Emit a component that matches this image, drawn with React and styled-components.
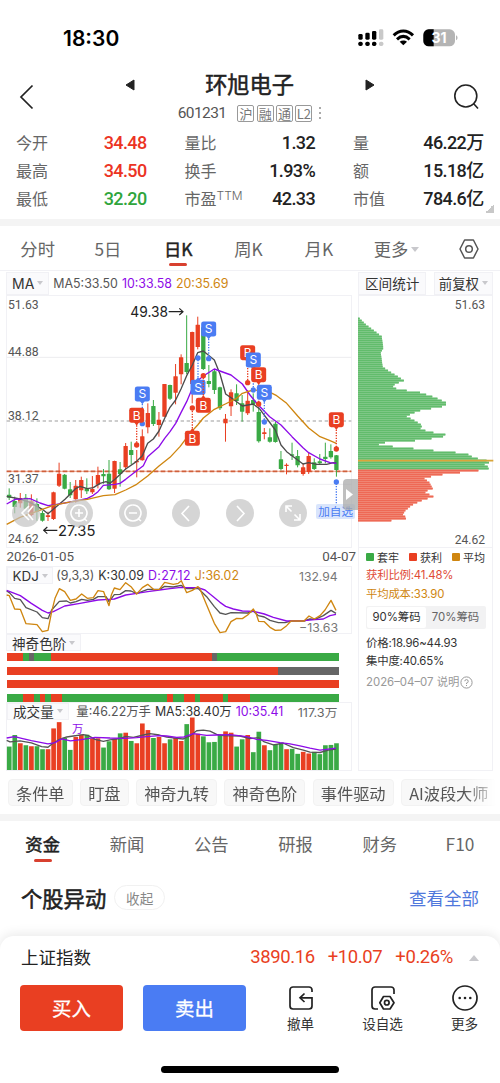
import styled, { createGlobalStyle } from "styled-components";

const RED = "#e93f22";
const GREEN = "#3aaa45";
const BLUE = "#4a7cf3";
const PURPLE = "#8d0be8";
const ORANGE = "#cf8610";
const INK = "#222";
const LINE = "#f1f1f5";

const CJK = `"Noto Sans CJK SC", sans-serif`;
const SANS = `Inter, ${CJK}`;
const DIN = `Roboto, ${CJK}`;

const GlobalStyle = createGlobalStyle`
  * { box-sizing: border-box; }
  body { margin: 0; background: #fff; }
  button { font: inherit; border: 0; padding: 0; background: none; color: inherit; }
`;

// ---------- data ----------

const quotes = [
  ["今开", "34.48", "#ec3323"],
  ["量比", "1.32"],
  ["量", "46.22万"],
  ["最高", "34.50", "#ec3323"],
  ["换手", "1.93%"],
  ["额", "15.18亿"],
  ["最低", "32.20", "#2fa53c"],
  ["市盈", "42.33", INK, "TTM"],
  ["市值", "784.6亿"],
];

// color, high, body top, body bottom, low (chart units, 3 per px)
const candles = [
  "g 655 674 683 690", "g 680 693 711 730", "r 669 684 700 713", "g 672 683 716 720",
  "r 673 694 735 738", "g 685 702 725 752", "g 722 729 752 755", "t 725 736 741 753",
  "r 665 667 747 750", "r 578 611 647 651", "g 612 614 656 658", "g 636 658 676 684",
  "r 630 647 688 698", "r 620 630 661 684", "g 625 655 664 672", "r 618 657 667 672",
  "r 590 615 644 655", "g 597 612 619 641", "g 570 611 658 660", "r 572 573 656 669",
  "g 576 598 612 650", "r 519 528 592 598", "g 515 540 555 583", "r 540 573 577 622",
  "r 478 499 571 572", "r 400 429 472 490", "g 390 408 462 468", "r 426 449 465 500",
  "r 342 342 440 440", "g 344 345 386 390", "r 282 319 368 403", "r 253 262 313 343",
  "g 136 279 306 312", "r 185 186 342 400", "r 140 164 231 238", "g 160 172 297 300",
  "g 285 333 342 352", "g 300 304 360 372", "g 350 352 415 420", "r 432 446 460 515",
  "r 358 367 409 438", "g 343 370 393 405", "g 375 400 425 455", "r 360 392 430 435",
  "g 370 390 402 425", "g 410 426 514 518", "r 474 487 492 508", "g 475 502 515 518",
  "g 455 461 516 518", "g 543 568 597 601", "r 580 584 588 613", "g 518 553 557 570",
  "g 540 558 586 592", "r 580 592 612 617", "r 548 558 606 612", "g 565 577 597 600",
  "g 552 574 580 585", "g 518 560 567 580", "g 523 543 562 566", "g 555 556 600 620",
].map((row) => {
  const [c, ...n] = row.split(" ");
  return [c, ...n.map(Number)];
});

const ma5 =
  "20,679 60,687 90,697 127,718 144,731 160,718 195,688 228,655 240,649 262,656 280,653 300,640 318,635 330,640 345,628 377,597 410,574 427,557 443,520 460,507 477,483 494,445 510,412 527,390 543,357 560,317 577,285 593,248 610,243 643,270 660,312 677,372 710,395 727,408 760,402 780,418 826,480 843,525 860,545 909,582 926,578 950,583 980,583 1000,578 1009,579";
const ma10 =
  "20,702 45,688 90,686 120,699 144,707 170,703 228,693 262,685 280,676 294,665 310,646 345,643 360,640 377,628 410,602 430,587 443,560 477,530 494,505 510,485 527,460 543,428 560,395 577,355 593,332 610,318 643,297 693,315 727,342 750,375 772,402 809,440 843,465 876,500 909,533 926,548 960,567 990,578 1009,580";
const ma20 =
  "20,763 60,742 100,728 160,706 200,698 262,688 310,677 345,674 377,660 410,643 443,618 477,588 510,562 540,530 570,490 593,465 610,444 643,418 676,402 710,385 727,370 759,360 800,362 830,377 860,400 893,438 926,474 960,500 990,512 1009,520";

// letter, x, label center y, dot y
const marks = [
  ["S", 427, 372, 461], ["B", 410, 436, 525], ["S", 626, 177, 266], ["S", 594, 352, 264],
  ["B", 610, 406, 317], ["B", 577, 505, 414], ["B", 743, 248, 338], ["S", 760, 270, 360],
  ["B", 776, 314, 402], ["S", 793, 367, 456], ["B", 1009, 449, 537],
];

// y, width
const chips = [
  [143, 5], [160, 22], [178, 46], [197, 71], [232, 76], [245, 68], [288, 74], [303, 96],
  [318, 121], [330, 139], [338, 112], [350, 103], [356, 126], [365, 186], [380, 232],
  [398, 270], [407, 252], [420, 181], [436, 144], [450, 171], [464, 193], [475, 186],
  [485, 226], [493, 274], [500, 241], [508, 186], [516, 66], [523, 61], [530, 136],
  [540, 236], [548, 326], [560, 346], [570, 390], [574, 396], [580, 378], [592, 397],
  [600, 356], [606, 296], [613, 236], [622, 198], [635, 214], [653, 224], [663, 198],
  [677, 226], [690, 188], [703, 161], [720, 141], [733, 134], [742, 151], [749, 100], [756, 76],
];

const kdjK =
  "20,138 28,143 44,160 61,164 78,188 111,201 127,218 144,221 155,195 178,169 200,168 211,174 228,170 245,163 262,166 280,163 294,155 318,155 327,170 343,149 360,148 377,137 393,138 410,146 427,139 443,133 478,133 494,124 520,126 543,121 560,131 594,130 620,155 643,185 660,204 677,208 693,203 743,204 760,198 775,212 793,216 810,226 835,233 855,233 873,228 912,228 930,222 945,223 970,212 993,196 1008,205";
const kdjD =
  "20,136 61,152 94,175 127,196 144,204 160,200 194,183 240,175 294,165 327,163 343,162 377,150 410,145 443,140 478,135 510,131 543,127 560,128 594,128 615,135 640,155 660,172 677,184 700,192 727,198 760,199 793,207 820,217 860,228 912,227 945,224 970,222 990,212 1008,208";
const kdjJ =
  "20,150 28,152 44,192 61,193 78,236 111,239 127,260 144,256 155,200 165,160 178,131 194,140 211,166 228,162 245,147 262,160 280,158 294,137 311,140 318,160 327,182 334,150 343,129 360,134 377,113 393,125 410,147 427,128 443,118 462,134 478,133 494,112 520,118 535,115 544,107 560,143 577,136 594,125 600,132 620,180 643,235 660,263 677,260 693,230 710,220 727,221 743,210 760,192 768,205 776,229 793,230 810,247 826,256 843,255 860,242 873,228 912,228 927,213 943,222 960,212 975,195 993,166 1008,196";

const ladder = [
  "r3 g1 k1 g3 r29 k1 g22",
  "r49 k11",
  "r60",
  "g3 r2 g1 r1 g1 r2 g19 r1 g2 r2 g1 r4 g1 r4 g16",
].map((row) => row.split(" ").map((s) => [s[0], Number(s.slice(1))]));

const volumes =
  "g157 g122 r147 g153 r156 g156 g165 r165 r102 r83 g130 g167 r128 r121 g121 r132 r132 g160 g141 r133 g117 r115 g140 r147 r87 r107 g131 r128 r147 g135 r130 r140 g89 r69 r118 g126 g144 g143 g122 r111 r115 g157 g135 r122 g174 g112 r153 g168 g150 g145 r165 g164 g179 r173 r178 g173 g180 g153 g152 g147"
    .split(" ")
    .map((s) => [s[0], Number(s.slice(1))]);
const vol5 =
  "20,138 30,143 60,140 94,146 125,157 144,159 155,150 175,137 200,128 220,125 250,121 265,124 285,135 310,141 330,137 360,133 377,126 400,129 430,122 450,118 478,122 500,128 530,132 550,134 570,125 590,109 610,107 630,110 650,120 670,124 720,125 750,133 776,130 793,143 820,152 850,147 880,160 910,168 930,174 960,175 985,168 1008,165";
const vol10 =
  "20,131 44,127 65,132 94,139 144,149 165,145 185,134 211,140 244,136 285,129 330,131 377,132 410,130 440,127 478,124 500,125 530,129 552,128 580,118 620,123 650,122 690,121 740,127 770,135 800,138 840,145 870,149 900,155 930,162 960,168 985,165 1008,162";

const fills = { r: RED, g: GREEN, k: "#666", t: RED };
const slotX = (i) => 27.5 + i * 16.64;

// ---------- layout ----------

const Screen = styled.div`
  width: 500px;
  height: 1083px;
  display: flex;
  flex-direction: column;
  overflow: hidden;
  background: #fff;
  color: ${INK};
  font-family: ${SANS};
`;

const StatusBar = styled.div`
  height: 70px;
  padding: 6px 42px 0 63px;
  display: flex;
  align-items: center;
  justify-content: space-between;
  font-size: 21px;
  font-weight: 600;
  color: #000;
`;

const Header = styled.header`
  height: 59px;
  display: grid;
  grid-template-columns: 18px 16px 90px 12px 1fr 12px 78px 26px 20px;
`;

const HeaderIcon = styled.button`
  display: flex;
  margin-top: ${(p) => p.$top}px;
  height: 26px;
`;

const TitleBlock = styled.div`
  display: flex;
  flex-direction: column;
  align-items: center;
`;

const Title = styled.div`
  height: 31px;
  margin-left: -1px;
  font: 400 22.2px/27px ${CJK};
  -webkit-text-stroke: 0.5px ${INK};
`;

const SubTitle = styled.div`
  height: 24px;
  display: flex;
  align-items: center;
  font: 400 15.5px/24px ${DIN};
  letter-spacing: -0.6px;
  color: #555;
  margin-left: 4px;
`;

const Tag = styled.span`
  width: 17px;
  height: 17px;
  margin-left: 2.3px;
  border: 1px solid #999;
  border-radius: 2px;
  display: flex;
  align-items: center;
  justify-content: center;
  font: 400 13px/15px ${CJK};
  letter-spacing: 0;
  color: #777;
  &:first-of-type {
    margin-left: 11px;
  }
`;

const Quotes = styled.div`
  height: 90px;
  padding: 0 17px 0 16px;
  display: grid;
  grid-template-columns: 130px 130px 130px;
  grid-auto-rows: 28px;
  justify-content: space-between;
  align-items: center;
  background: linear-gradient(135deg, transparent 50%, #c8c8c8 50%) 485px 75px / 9px 9px no-repeat;
`;

const Quote = styled.div`
  display: flex;
  justify-content: space-between;
  height: 28px;
  font: 400 16px/26px ${CJK};
  color: #666;
  sup {
    font: 300 12px/12px ${SANS};
    vertical-align: 5px;
  }
`;

const QuoteValue = styled.b`
  font: 500 18px/28px ${DIN};
  letter-spacing: -0.6px;
  margin-right: -0.6px;
  color: ${(p) => p.$color || INK};
`;

const Divider = styled.div`
  height: ${(p) => p.$h}px;
  flex: none;
  background: #f4f4f4;
`;

const Tabs = styled.nav`
  display: flex;
  height: ${(p) => p.$h}px;
  padding-left: ${(p) => p.$pad}px;
`;

const Tab = styled.button`
  position: relative;
  width: ${(p) => p.$w}px;
  height: 46px;
  display: flex;
  align-items: center;
  justify-content: center;
  gap: 3px;
  font: 400 17.3px/46px ${CJK};
  color: ${(p) => (p.$active ? INK : "#666")};
  -webkit-text-stroke: ${(p) => (p.$active ? "0.5px" : "0")} ${INK};
  &::after {
    content: "";
    display: ${(p) => (p.$active ? "block" : "none")};
    position: absolute;
    left: calc(50% - 9px);
    bottom: ${(p) => p.$bar}px;
    width: 18px;
    height: 2.6px;
    border-radius: 2px;
    background: #d8402f;
  }
`;

const Caret = styled.i`
  border: ${(p) => p.$s || 3}px solid transparent;
  border-bottom-width: 0;
  border-top: ${(p) => (p.$s || 3) + 1}px solid #c8c8cc;
`;

const Charts = styled.section`
  height: 501px;
  padding: 0 7px 0 6px;
  display: grid;
  grid-template-columns: 346px 135px;
  justify-content: space-between;
  border-top: 1px solid ${LINE};
`;

const Column = styled.div`
  display: flex;
  flex-direction: column;
  min-width: 0;
`;

const Toolbar = styled.div`
  height: ${(p) => p.$h || 24}px;
  display: flex;
  align-items: center;
  justify-content: ${(p) => (p.$spread ? "space-between" : "flex-start")};
`;

const Picker = styled.button`
  flex: none;
  height: ${(p) => p.$h || 23}px;
  padding: 0 ${(p) => p.$pad || 5}px;
  display: flex;
  align-items: center;
  gap: 3px;
  background: #fafafc;
  border: 1px solid ${LINE};
  font-size: ${(p) => p.$size || 13.6}px;
  white-space: nowrap;
  color: #333;
`;

const Legend = styled.span`
  font-size: 12.4px;
  letter-spacing: ${(p) => p.$track || 0}px;
  margin-left: ${(p) => p.$gap || 4}px;
  white-space: nowrap;
  color: ${(p) => p.$color || "#555"};
`;

const Panel = styled.div`
  position: relative;
  flex: none;
  height: ${(p) => p.$h}px;
  border: 1px solid ${LINE};
  display: grid;
  grid-template: 1fr / 1fr;
  > * {
    grid-area: 1 / 1;
    min-width: 0;
    min-height: 0;
  }
`;

const Plot = styled.svg`
  display: block;
  width: 100%;
  height: 100%;
  overflow: visible;
`;

const DateRow = styled.div`
  height: 18px;
  flex: none;
  display: flex;
  justify-content: space-between;
  margin-right: -4px;
  padding-left: 0.5px;
  font: 400 13.4px/17px ${DIN};
  color: #555;
`;

const ZoomTools = styled.div`
  position: absolute;
  left: 5px;
  top: 203px;
  display: flex;
  gap: 25.4px;
`;

const Round = styled.button`
  width: 28px;
  height: 28px;
  border-radius: 50%;
  display: flex;
  align-items: center;
  justify-content: center;
  background: rgba(195, 195, 195, 0.7);
`;

const Drawer = styled.button`
  position: absolute;
  right: -6.5px;
  top: 183px;
  width: 14.5px;
  height: 31px;
  border-radius: 4px 0 0 4px;
  display: flex;
  align-items: center;
  justify-content: center;
  background: rgba(170, 170, 170, 0.75);
`;

const AddTag = styled.span`
  position: absolute;
  right: -4px;
  top: 208px;
  height: 15px;
  padding: 0 2px;
  border-radius: 2px;
  background: rgba(210, 224, 252, 0.85);
  font: 400 11.6px/15px ${CJK};
  color: ${BLUE};
`;

const Ladder = styled.div`
  display: flex;
  flex-direction: column;
  gap: 5.4px;
  padding: 2px 13px 0 0.5px;
`;

const Stripe = styled.div`
  display: flex;
  height: 8.2px;
`;

const Segment = styled.span`
  flex: ${(p) => p.$n} 0 0;
  background: ${(p) => fills[p.$c]};
`;

const Keys = styled.div`
  display: flex;
  gap: 10px;
  font: 400 11px/18px ${CJK};
  color: #333;
`;

const Key = styled.span`
  display: flex;
  align-items: center;
  gap: 3px;
  &::before {
    content: "";
    width: 8px;
    height: 8px;
    border-radius: 1px;
    background: ${(p) => p.$color};
  }
`;

const Side = styled.div`
  flex: 1;
  padding-left: 7px;
  border: 1px solid ${LINE};
  border-top: 0;
`;

const Fact = styled.div`
  display: flex;
  align-items: center;
  font: 400 11.4px/18.6px ${SANS};
  letter-spacing: ${(p) => (p.$note ? 0 : -0.2)}px;
  margin-top: ${(p) => (p.$note ? 2.5 : 0)}px;
  gap: 1px;
  white-space: nowrap;
  color: ${(p) => p.$color || "#333"};
`;

const Toggle = styled.div`
  width: 120px;
  height: 23px;
  margin: 3px 0 4.5px;
  padding: 1px;
  display: flex;
  background: #f2f2f3;
  border-radius: 2px;
`;

const ToggleItem = styled.button`
  flex: 1;
  border-radius: 2px;
  background: ${(p) => (p.$on ? "#fff" : "transparent")};
  color: ${(p) => (p.$on ? "#333" : "#666")};
  font: 400 11.4px/21px ${SANS};
`;

const ChipRow = styled.div`
  height: 43px;
  flex: none;
  padding: 8px 0 0 8px;
  display: flex;
  gap: 7.6px;
  mask-image: linear-gradient(90deg, #000 465px, rgba(0, 0, 0, 0.3) 490px, transparent 496px);
`;

const Chip = styled.button`
  flex: none;
  height: 27px;
  padding: 0 7px;
  border: 1px solid #f2f2f2;
  border-radius: 4px;
  background: #f8f8f8;
  font: 400 16.2px/24px ${CJK};
  color: #555;
`;

const SectionHead = styled.div`
  flex: 1;
  padding: 14px 21px 0;
  display: flex;
  align-items: flex-start;
  line-height: 32px;
`;

const SectionTitle = styled.h2`
  margin: 0;
  font: 400 21.3px/32px ${CJK};
  -webkit-text-stroke: 0.55px ${INK};
`;

const Fold = styled.button`
  width: 51px;
  height: 25px;
  margin: 3px 0 0 8px;
  border: 1.5px solid #f1f1f1;
  border-radius: 13px;
  font: 400 13.6px/20px ${CJK};
  color: #888;
`;

const More = styled.a`
  margin-left: auto;
  font: 400 17.5px/32px ${CJK};
  color: #5078dc;
`;

const Sheet = styled.footer`
  height: 147px;
  flex: none;
  border-radius: 14px 14px 0 0;
  box-shadow: 0 -2px 12px rgba(0, 0, 0, 0.09);
  background: #fff;
  display: flex;
  flex-direction: column;
`;

const IndexRow = styled.div`
  height: 49px;
  padding: 0 21px 6px;
  display: flex;
  align-items: center;
  gap: 13px;
  font: 400 17.5px/41px ${CJK};
`;

const IndexName = styled.span`
  height: 43px;
`;

const IndexValue = styled.span`
  font: 400 18.5px/43px ${DIN};
  letter-spacing: -0.4px;
  color: ${RED};
`;

const Spacer = styled.span`
  flex: 1;
`;

const UpCaret = styled.i`
  margin-left: 3px;
  border: 5px solid transparent;
  border-top-width: 0;
  border-bottom: 6px solid #c8c8cc;
`;

const Actions = styled.div`
  padding: 0 21px 0 20px;
  height: 78px;
  display: flex;
`;

const Trade = styled.button`
  width: 103px;
  height: 46px;
  margin-right: 20px;
  border-radius: 4px;
  background: ${(p) => p.$color};
  color: #fff;
  font: 400 19.4px/44px ${CJK};
  -webkit-text-stroke: 0.3px #fff;
`;

const Tool = styled.button`
  display: flex;
  flex-direction: column;
  align-items: center;
  margin-left: ${(p) => p.$gap}px;
  font: 400 13.6px/25px ${CJK};
  color: #333;
  svg {
    display: block;
  }
`;

const HomeIndicator = styled.div`
  width: 178px;
  height: 7px;
  margin: 3px auto 0;
  border-radius: 4px;
  background: #000;
`;

// ---------- icons ----------

const StatusIcons = () => (
  <svg width="100" height="18" viewBox="1073 86 300 54">
    <g fill="#000">
      {[[1074, 101], [1095, 97], [1115, 92]].map(([x, y]) => (
        <g key={x}>
          <rect x={x} y={y} width="13" height={118 - y} rx="4" />
          <rect x={x} y="124" width="13" height="13" rx="5" />
        </g>
      ))}
    </g>
    <g fill="#c9c9c9">
      <rect x="1136" y="87" width="13" height="31" rx="4" />
      <rect x="1136" y="124" width="13" height="13" rx="5" />
    </g>
    <g fill="none" stroke="#000" strokeWidth="9">
      <path d="M1180 105C1197 88 1221 88 1238 105" />
      <path d="M1190 117C1202 106 1216 106 1228 117" />
    </g>
    <path d="M1198 124C1204 119 1214 119 1220 124L1209 135Z" fill="#000" />
    <rect x="1269" y="87" width="95" height="51" rx="16" fill="#b4b4b4" />
    <path d="M1300 87H1285A16 16 0 0 0 1269 103V122A16 16 0 0 0 1285 138H1300Z" fill="#000" />
    <path d="M1367 105C1373 108 1373 117 1367 120Z" fill="#b4b4b4" />
    <text x="1316" y="128" fontFamily={SANS} fontSize="42" fontWeight="700" fill="#fff" textAnchor="middle">31</text>
  </svg>
);

const BackIcon = () => (
  <svg width="16" height="26" viewBox="0 0 16 26" fill="none" stroke={INK} strokeWidth="1.7">
    <path d="M14.5 1.5 3 13 14.5 24.5" />
  </svg>
);

const SearchIcon = () => (
  <svg width="26" height="26" viewBox="0 0 26 26" fill="none" stroke={INK} strokeWidth="1.6">
    <circle cx="11.8" cy="12" r="11" />
    <path d="M19.5 19.5 24 24.5" />
  </svg>
);

const Arrow = ({ flip }) => (
  <svg width="12" height="14" viewBox="0 0 12 14" fill={INK}>
    <path d={flip ? "M2 2 10 7 2 12Z" : "M10 2 2 7 10 12Z"} stroke={INK} strokeLinejoin="round" />
  </svg>
);

const GearIcon = () => (
  <svg width="20" height="20" viewBox="0 0 20 20" fill="none" stroke="#555" strokeWidth="1.5">
    <path d="M5.6 1H14.4L19 10 14.4 19H5.6L1 10Z" strokeLinejoin="round" />
    <circle cx="10" cy="10" r="3.3" />
  </svg>
);

const CancelIcon = () => (
  <svg width="26" height="26" viewBox="0 0 26 26" fill="none" stroke={INK} strokeWidth="1.7">
    <path d="M24 7V5A3 3 0 0 0 21 2H5A3 3 0 0 0 2 5V21A3 3 0 0 0 5 24H21A3 3 0 0 0 24 21V12.8H12.5" />
    <path d="M16.5 8.5 12 12.8 16.5 17" />
  </svg>
);

const WatchIcon = () => (
  <svg width="26" height="26" viewBox="0 0 26 26" fill="none" stroke={INK} strokeWidth="1.7">
    <path d="M24 9V5A3 3 0 0 0 21 2H5A3 3 0 0 0 2 5V21A3 3 0 0 0 5 24H8" />
    <path d="M13.5 11.5H20L24 17.7 20 24H13.5L9.8 17.7Z" strokeLinejoin="round" />
    <circle cx="16.8" cy="17.7" r="2.3" />
  </svg>
);

const MoreIcon = () => (
  <svg width="26" height="26" viewBox="0 0 26 26" fill="none" stroke={INK} strokeWidth="1.7">
    <circle cx="13" cy="13" r="12" />
    <g fill={INK} stroke="none">
      <circle cx="7.7" cy="13" r="1.3" />
      <circle cx="13" cy="13" r="1.3" />
      <circle cx="18.3" cy="13" r="1.3" />
    </g>
  </svg>
);

const toolPaths = [
  "M13 3 6 10 13 17M17 3 12 9M17 17 12 11",
  "M10 2A8 8 0 1 1 9.9 2M6 10H14M10 6V14M15.5 16 18 18",
  "M10 2A8 8 0 1 1 9.9 2M6 10H14M15.5 16 18 18",
  "M13 3 6 10.5 13 18",
  "M7 3 14 10.5 7 18",
  "M3 9V3H9M3 3 8.5 8.5M17 11V17H11M17 17 11.5 11.5",
];

// ---------- charts ----------

const Line = ({ points, color }) => (
  <polyline points={points} fill="none" stroke={color} strokeWidth="4" strokeLinejoin="round" />
);

const AxisText = ({ x, y, w, size = 40, family = DIN, fill = "#555", children }) => (
  <text x={x} y={y} fontFamily={family} fontSize={size} fill={fill} textLength={w} lengthAdjust="spacingAndGlyphs">
    {children}
  </text>
);

const Mark = ({ letter, x, y, dot }) => {
  const color = letter === "B" ? RED : BLUE;
  const dir = dot > y ? 1 : -1;
  return (
    <g>
      <path d={`M${x} ${y + 22 * dir}V${dot}`} stroke={color} strokeWidth="4" strokeDasharray="4 4" />
      <circle cx={x} cy={dot} r="8" fill={color} />
      <path d={`M${x - 8} ${y + 20 * dir}h16l-8 ${11 * dir}z`} fill={color} />
      <rect x={x - 22.5} y={y - 22.5} width="45" height="45" rx="7" fill={color} />
      <text x={x} y={y + 13} fontFamily={SANS} fontSize="36" fill="#fff" textAnchor="middle">
        {letter}
      </text>
    </g>
  );
};

const CandleChart = () => (
  <Plot viewBox="21 78 1032 753" preserveAspectRatio="none">
    <g stroke="#ececef" strokeWidth="3">
      <path d="M20 262H1054M20 643H1054" />
    </g>
    <path d="M20 453H1054" stroke="#bdbdbd" strokeWidth="4" strokeDasharray="10 8" />
    <AxisText x="24" y="116" w="92">51.63</AxisText>
    <AxisText x="24" y="259" w="92">44.88</AxisText>
    <AxisText x="24" y="450" w="92">38.12</AxisText>
    <AxisText x="24" y="639" w="92">31.37</AxisText>
    <AxisText x="24" y="820" w="92">24.62</AxisText>
    <path d="M20 604H1054" stroke="#f3b8a4" strokeWidth="4" />
    <path d="M20 604H1054" stroke="#d0603c" strokeWidth="5" strokeDasharray="14 7" />
    {candles.map(([c, hi, top, bottom, lo], i) => (
      <g key={i} fill={fills[c]}>
        <rect x={slotX(i) - 1.5} y={hi} width="3" height={lo - hi} />
        <rect x={slotX(i) - 6.5} y={top} width="13" height={bottom - top} rx="1" />
      </g>
    ))}
    <Line points={ma5} color="#4c4c4c" />
    <Line points={ma10} color={PURPLE} />
    <Line points={ma20} color={ORANGE} />
    {marks.map(([letter, x, y, dot], i) => (
      <Mark key={i} letter={letter} x={x} y={y} dot={dot} />
    ))}
    <path d="M1009 640V704" stroke={BLUE} strokeWidth="4" strokeDasharray="4 4" />
    <circle cx="1009" cy="636" r="8" fill={BLUE} />
    <AxisText x="391" y="141" w="113" size="43" family={SANS} fill="#222">49.38</AxisText>
    <AxisText x="174" y="797" w="112" size="43" family={SANS} fill="#222">27.35</AxisText>
    <path d="M506 125H549M538 115 549 125 538 135M172 781H131M142 771 131 781 142 791" fill="none" stroke="#222" strokeWidth="3.5" />
  </Plot>
);

const widthAt = (y) => {
  const k = chips.findIndex((c) => c[0] > y);
  const [y0, w0] = chips[k - 1];
  const [y1, w1] = chips[k];
  return w0 + ((w1 - w0) * (y - y0)) / (y1 - y0);
};

const ChipChart = () => {
  const rows = [];
  for (let y = 143; y < 754; y += 6) rows.push(y);
  return (
    <Plot viewBox="3 0 399 753" preserveAspectRatio="none">
      <g transform="translate(0 -78)">
        {rows.map((y) => (
          <g key={y}>
            <rect x="0" y={y} width={widthAt(y)} height="6" fill={y < 598 ? "#75c47e" : "#f17e6b"} />
            <rect x="0" y={y} width={widthAt(y)} height="4.4" fill={y < 598 ? "#62bc6c" : "#ee6955"} />
          </g>
        ))}
        <path d="M0 572H406" stroke="#d9a53a" strokeWidth="5" />
        <AxisText x="290" y="116" w="91">51.63</AxisText>
        <AxisText x="290" y="822" w="91">24.62</AxisText>
      </g>
    </Plot>
  );
};

const KdjChart = () => (
  <Plot viewBox="21 66 1032 198" preserveAspectRatio="none">
    <Line points={kdjK} color="#555" />
    <Line points={kdjD} color={PURPLE} />
    <Line points={kdjJ} color={ORANGE} />
    <AxisText x="897" y="107" w="116" size="37" family={SANS} fill="#777">132.94</AxisText>
    <AxisText x="897" y="261" w="117" size="37" family={SANS} fill="#777">−13.63</AxisText>
  </Plot>
);

const VolumeChart = () => (
  <Plot viewBox="21 25 1032 203" preserveAspectRatio="none">
    {volumes.map(([c, y], i) => (
      <rect key={i} x={slotX(i) - 6.8} y={y} width="14" height={228 - y} fill={fills[c]} />
    ))}
    <Line points={vol5} color="#555" />
    <Line points={vol10} color={PURPLE} />
    <AxisText x="216" y="117" w="34" size="34" family={CJK} fill={PURPLE}>万</AxisText>
    <AxisText x="893" y="68" w="119" size="36" family={SANS} fill="#666">117.3万</AxisText>
  </Plot>
);

// ---------- page ----------

const App = () => (
  <>
    <GlobalStyle />
    <Screen>
      <StatusBar>
        <span>18:30</span>
        <StatusIcons />
      </StatusBar>

      <Header>
        <span />
        <HeaderIcon $top={14}><BackIcon /></HeaderIcon>
        <span />
        <HeaderIcon $top={8}><Arrow /></HeaderIcon>
        <TitleBlock>
          <Title>环旭电子</Title>
          <SubTitle>
            601231
            <Tag>沪</Tag>
            <Tag>融</Tag>
            <Tag>通</Tag>
            <Tag>L2</Tag>
            <svg width="14" height="14" viewBox="0 0 14 14" fill="#aaa">
              <path d="M7 1h2v2H7zM7 6h2v2H7zM7 11h2v2H7z" />
            </svg>
          </SubTitle>
        </TitleBlock>
        <HeaderIcon $top={8}><Arrow flip /></HeaderIcon>
        <span />
        <HeaderIcon $top={14}><SearchIcon /></HeaderIcon>
      </Header>

      <Quotes>
        {quotes.map(([label, value, color, sup]) => (
          <Quote key={label}>
            <span>
              {label}
              {sup && <sup>{sup}</sup>}
            </span>
            <QuoteValue $color={color}>{value}</QuoteValue>
          </Quote>
        ))}
      </Quotes>
      <Divider $h={7} />

      <Tabs $h={44} $pad={2.5}>
        {["分时", "5日", "日K", "周K", "月K"].map((t) => (
          <Tab key={t} $w={70.3} $bar={6} $active={t === "日K"}>{t}</Tab>
        ))}
        <Tab $w={85} $bar={6}>
          更多
          <Caret $s={4.5} />
        </Tab>
        <Tab $w={60} $bar={6}><GearIcon /></Tab>
      </Tabs>

      <Charts>
        <Column>
          <Toolbar>
            <Picker $size={14}>MA <Caret /></Picker>
            <Legend>MA5:33.50</Legend>
            <Legend $color={PURPLE}>10:33.58</Legend>
            <Legend $color={ORANGE}>20:35.69</Legend>
          </Toolbar>
          <Panel $h={253}>
            <CandleChart />
            <ZoomTools>
              {toolPaths.map((d) => (
                <Round key={d}>
                  <svg width="20" height="20" viewBox="0 0 20 20" fill="none" stroke="#fff" strokeWidth="1.6">
                    <path d={d} />
                  </svg>
                </Round>
              ))}
            </ZoomTools>
            <AddTag>加自选</AddTag>
            <Drawer>
              <svg width="8" height="11" viewBox="0 0 8 11" fill="#fff">
                <path d="M0 0 7 5.5 0 11Z" />
              </svg>
            </Drawer>
          </Panel>
          <DateRow>
            <span>2026-01-05</span>
            <span>04-07</span>
          </DateRow>
          <Panel $h={68}>
            <KdjChart />
            <Toolbar $h={17}>
              <Picker $h={17} $size={13.4} $pad={4.5}>KDJ <Caret /></Picker>
              <Legend $gap={3}>(9,3,3)</Legend>
              <Legend $color="#333">K:30.09</Legend>
              <Legend $color={PURPLE} $track={0.3}>D:27.12</Legend>
              <Legend $color={ORANGE}>J:36.02</Legend>
            </Toolbar>
          </Panel>
          <Toolbar $h={17}>
            <Picker $h={17}>神奇色阶 <Caret /></Picker>
          </Toolbar>
          <Ladder>
            {ladder.map((row, i) => (
              <Stripe key={i}>
                {row.map(([c, n], j) => (
                  <Segment key={j} $c={c} $n={n} />
                ))}
              </Stripe>
            ))}
          </Ladder>
          <Panel $h={69}>
            <VolumeChart />
            <Toolbar $h={17}>
              <Picker $h={17}>成交量 <Caret /></Picker>
              <Legend $gap={7.5}>量:46.22万手</Legend>
              <Legend $color="#333" $track={-0.1}>MA5:38.40万</Legend>
              <Legend $color={PURPLE}>10:35.41</Legend>
            </Toolbar>
          </Panel>
        </Column>

        <Column>
          <Toolbar $spread>
            <Picker $pad={6}>区间统计</Picker>
            <Picker $size={13.4} $pad={4}>前复权 <Caret /></Picker>
          </Toolbar>
          <Panel $h={253}>
            <ChipChart />
          </Panel>
          <Side>
            <Keys>
              <Key $color={GREEN}>套牢</Key>
              <Key $color={RED}>获利</Key>
              <Key $color={ORANGE}>平均</Key>
            </Keys>
            <Fact $color="#e04a35">获利比例:41.48%</Fact>
            <Fact $color={ORANGE}>平均成本:33.90</Fact>
            <Toggle>
              <ToggleItem $on>90%筹码</ToggleItem>
              <ToggleItem>70%筹码</ToggleItem>
            </Toggle>
            <Fact>价格:18.96~44.93</Fact>
            <Fact>集中度:40.65%</Fact>
            <Fact $color="#999" $note>
              2026–04–07 说明
              <svg width="13" height="13" viewBox="0 0 13 13" fill="none" stroke="#999">
                <circle cx="6.5" cy="6.5" r="5.6" />
                <path d="M4.8 5.2A1.7 1.7 0 1 1 6.5 7V8M6.5 9V10" />
              </svg>
            </Fact>
          </Side>
        </Column>
      </Charts>

      <ChipRow>
        {["条件单", "盯盘", "神奇九转", "神奇色阶", "事件驱动", "AI波段大师"].map((c) => (
          <Chip key={c}>{c}</Chip>
        ))}
      </ChipRow>
      <Divider $h={7} />

      <Tabs $h={47} $pad={0.5}>
        {["资金", "新闻", "公告", "研报", "财务", "F10"].map((t) => (
          <Tab key={t} $w={t === "F10" ? 76 : 84.3} $bar={5} $active={t === "资金"}>{t}</Tab>
        ))}
      </Tabs>

      <SectionHead>
        <SectionTitle>个股异动</SectionTitle>
        <Fold>收起</Fold>
        <More>查看全部</More>
      </SectionHead>

      <Sheet>
        <IndexRow>
          <IndexName>上证指数</IndexName>
          <Spacer />
          <IndexValue>3890.16</IndexValue>
          <IndexValue>+10.07</IndexValue>
          <IndexValue>+0.26%</IndexValue>
          <UpCaret />
        </IndexRow>
        <Actions>
          <Trade $color={RED}>买入</Trade>
          <Trade $color={BLUE}>卖出</Trade>
          <Tool $gap={21}><CancelIcon />撤单</Tool>
          <Tool $gap={48}><WatchIcon />设自选</Tool>
          <Tool $gap={48}><MoreIcon />更多</Tool>
        </Actions>
        <HomeIndicator />
      </Sheet>
    </Screen>
  </>
);

export default App;
